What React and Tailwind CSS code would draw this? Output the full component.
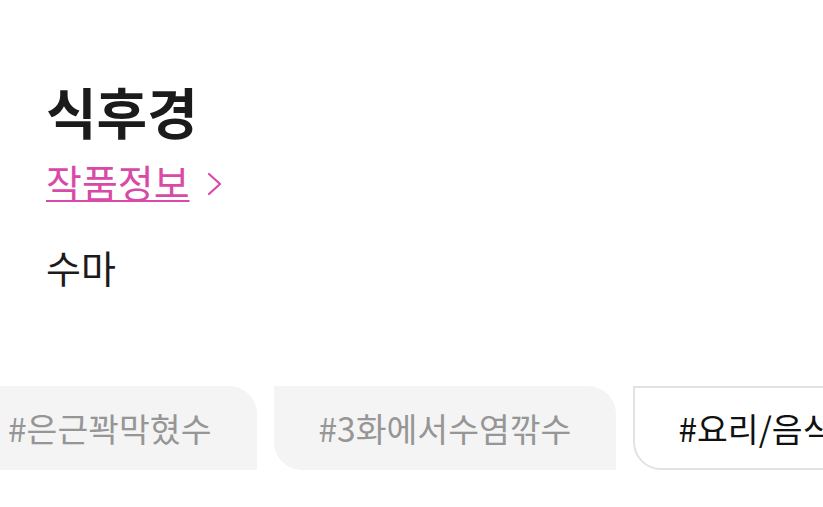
export default function App() {
  const tags = [
    { label: "#은근꽉막혔수", active: false },
    { label: "#3화에서수염깎수", active: false },
    { label: "#요리/음식", active: true },
  ];

  return (
    <div
      className="h-[507px] w-[823px] overflow-hidden bg-white"
      style={{ fontFamily: '"Noto Sans CJK KR", "Noto Sans", sans-serif' }}
    >
      <div className="px-[46px] pt-[74px]">
        <h1 className="text-[55px] font-semibold leading-[72px] text-[#1b1b1b]">식후경</h1>
        <div className="mt-[9px] flex items-center gap-[16px]">
          <span className="text-[39px] leading-[52px] text-[#d94aa6] underline decoration-[2px] underline-offset-[2px]">
            작품정보
          </span>
          <svg width="17" height="24" viewBox="0 0 17 24" fill="none" className="mt-[6px]">
            <path d="M3 2 L14 12 L3 22" stroke="#d94aa6" strokeWidth="2.2" strokeLinecap="round" strokeLinejoin="round" />
          </svg>
        </div>
        <p className="mt-[35px] text-[38px] leading-[50px] text-[#1b1b1b]">수마</p>
      </div>

      <div className="ml-[-37px] mt-[94px] flex gap-[17px]">
        {tags.map((t) => (
          <div
            key={t.label}
            className={
              t.active
                ? "flex h-[84px] shrink-0 items-center whitespace-nowrap rounded-tr-[28px] rounded-bl-[28px] border-2 border-[#e2e2e2] bg-white px-[43px] text-[33.5px] text-[#111]"
                : "flex h-[84px] shrink-0 items-center whitespace-nowrap rounded-tr-[28px] rounded-bl-[28px] bg-[#f4f4f4] px-[45px] text-[33.5px] text-[#969696]"
            }
          >
            {t.label}
          </div>
        ))}
      </div>
    </div>
  );
}
